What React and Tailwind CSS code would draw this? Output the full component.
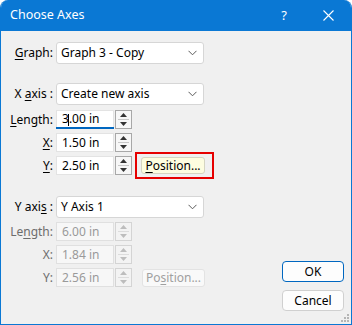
import React from "react";

const font = "font-['Noto_Sans','Liberation_Sans',sans-serif]";

function Chevron() {
  return (
    <svg width="9" height="6" viewBox="0 0 9 6" className="shrink-0">
      <path d="M0.5 0.8 L4.5 4.8 L8.5 0.8" fill="none" stroke="#5a5a5a" strokeWidth="1" />
    </svg>
  );
}

function Dropdown({ text }) {
  return (
    <div className="w-[148px] h-[22px] bg-white border border-[#d6d6d6] rounded-[3px] flex items-center pl-[4px] pr-[6px] justify-between">
      <span className="text-[#000] leading-none">{text}</span>
      <Chevron />
    </div>
  );
}

function Spinner({ disabled }) {
  const fill = disabled ? "#bdbdbd" : "#333";
  return (
    <div
      className={
        disabled
          ? "w-[17px] h-[19px] border border-[#d4d4d4] bg-[#f3f3f3] flex flex-col"
          : "w-[17px] h-[19px] border border-[#a8a8a8] bg-[#f7f7f7] flex flex-col"
      }
    >
      <div className="flex-1 flex items-center justify-center">
        <svg width="7" height="4" viewBox="0 0 7 4">
          <path d="M0 4 L3.5 0 L7 4 Z" fill={fill} />
        </svg>
      </div>
      <div className={disabled ? "h-px bg-[#dcdcdc] mx-[2px]" : "h-px bg-[#c8c8c8] mx-[2px]"} />
      <div className="flex-1 flex items-center justify-center">
        <svg width="7" height="4" viewBox="0 0 7 4">
          <path d="M0 0 L3.5 4 L7 0 Z" fill={fill} />
        </svg>
      </div>
    </div>
  );
}

function NumField({ value, disabled, focused, caret }) {
  return (
    <div className="flex items-center gap-[1px]">
      <div
        className={
          disabled
            ? "relative w-[58px] h-[19px] bg-[#f7f7f7] border border-[#e0e0e0] flex items-center pl-[5px] text-[#9a9a9a]"
            : "relative w-[58px] h-[19px] bg-white border border-[#e3e3e3] flex items-center pl-[5px] text-black"
        }
      >
        {caret ? (
          <span className="leading-none">
            3<span className="inline-block w-px h-[12px] bg-black align-middle mx-[-0.5px]" />.00 in
          </span>
        ) : (
          <span className="leading-none">{value}</span>
        )}
        {focused && <div className="absolute left-[-1px] right-[-1px] bottom-[-1px] h-[2px] bg-[#0067c0]" />}
      </div>
      <Spinner disabled={disabled} />
    </div>
  );
}

function Label({ children, disabled }) {
  return (
    <div
      className={
        disabled
          ? "w-[43px] text-right whitespace-nowrap text-[#6d6d6d] leading-none"
          : "w-[43px] text-right whitespace-nowrap text-black leading-none"
      }
    >
      {children}
    </div>
  );
}

function U({ children }) {
  return <span className="underline underline-offset-[2px] decoration-[1px]">{children}</span>;
}

export default function App() {
  return (
    <div className={`${font} text-[12px] w-[352px] h-[325px] bg-white`}>
      <div className="w-[352px] h-[325px] flex flex-col rounded-t-[8px] overflow-hidden border border-[#0a78d4] border-t-0 bg-[#f0f0f0]">
        <div className="h-[31px] bg-[#0a78d4] flex items-center text-white shrink-0">
          <span className="pl-[9px] text-[12.5px]">Choose Axes</span>
          <span className="ml-auto mr-[36px] text-[13px]">?</span>
          <svg width="11" height="11" viewBox="0 0 11 11" className="mr-[17px]">
            <path d="M0.5 0.5 L10.5 10.5 M10.5 0.5 L0.5 10.5" stroke="white" strokeWidth="1.1" />
          </svg>
        </div>
        <div className="relative flex-1 flex">
          <div className="flex flex-col pl-[9px] pt-[11px]">
            <div className="flex items-center gap-[3px]">
              <Label>
                <U>G</U>raph:
              </Label>
              <Dropdown text="Graph 3 - Copy" />
            </div>
            <div className="flex items-center gap-[3px] mt-[19px]">
              <Label>
                X <U>a</U>xis :
              </Label>
              <Dropdown text="Create new axis" />
            </div>
            <div className="flex items-center gap-[3px] mt-[5px]">
              <Label>
                <U>L</U>ength:
              </Label>
              <NumField value="3.00 in" focused caret />
            </div>
            <div className="flex items-center gap-[3px] mt-[4px]">
              <Label>
                <U>X</U>:
              </Label>
              <NumField value="1.50 in" />
            </div>
            <div className="flex items-center gap-[3px] mt-[4px]">
              <Label>
                <U>Y</U>:
              </Label>
              <NumField value="2.50 in" />
              <div className="relative ml-[6px]">
                <div className="w-[64px] h-[17px] bg-[#fdfde0] border border-[#d5d5c2] rounded-[3px] flex items-center justify-center text-black leading-none">
                  <span>
                    <U>P</U>osition...
                  </span>
                </div>
                <div className="absolute -left-[6px] -right-[9px] -top-[5px] -bottom-[5px] border-2 border-[#e60000]" />
              </div>
            </div>
            <div className="flex items-center gap-[3px] mt-[21px]">
              <Label>
                Y axi<U>s</U> :
              </Label>
              <Dropdown text="Y Axis 1" />
            </div>
            <div className="flex items-center gap-[3px] mt-[4px]">
              <Label disabled>
                Le<U>n</U>gth:
              </Label>
              <NumField value="6.00 in" disabled />
            </div>
            <div className="flex items-center gap-[3px] mt-[4px]">
              <Label disabled>X:</Label>
              <NumField value="1.84 in" disabled />
            </div>
            <div className="flex items-center gap-[3px] mt-[4px]">
              <Label disabled>Y:</Label>
              <NumField value="2.56 in" disabled />
              <div className="ml-[7px] w-[63px] h-[18px] bg-[#f9f9f9] border border-[#e3e3e3] rounded-[3px] flex items-center justify-center text-[#a0a0a0] leading-none">
                <span>
                  Po<U>s</U>ition...
                </span>
              </div>
            </div>
          </div>
          <div className="ml-auto flex flex-col justify-end gap-[8px] pb-[13px] pr-[7px]">
            <div className="w-[62px] h-[21px] bg-[#fdfdfd] border border-[#0067c0] rounded-[4px] flex items-center justify-center text-black leading-none">
              OK
            </div>
            <div className="w-[62px] h-[21px] bg-[#fdfdfd] border border-[#d0d0d0] rounded-[4px] flex items-center justify-center text-black leading-none">
              Cancel
            </div>
          </div>
          <svg width="9" height="9" viewBox="0 0 9 9" className="absolute right-[1px] bottom-[1px]">
            <rect x="6" y="0" width="2" height="2" fill="#b5b5b5" />
            <rect x="3" y="3" width="2" height="2" fill="#b5b5b5" />
            <rect x="6" y="3" width="2" height="2" fill="#b5b5b5" />
            <rect x="0" y="6" width="2" height="2" fill="#b5b5b5" />
            <rect x="3" y="6" width="2" height="2" fill="#b5b5b5" />
            <rect x="6" y="6" width="2" height="2" fill="#b5b5b5" />
          </svg>
        </div>
      </div>
    </div>
  );
}
